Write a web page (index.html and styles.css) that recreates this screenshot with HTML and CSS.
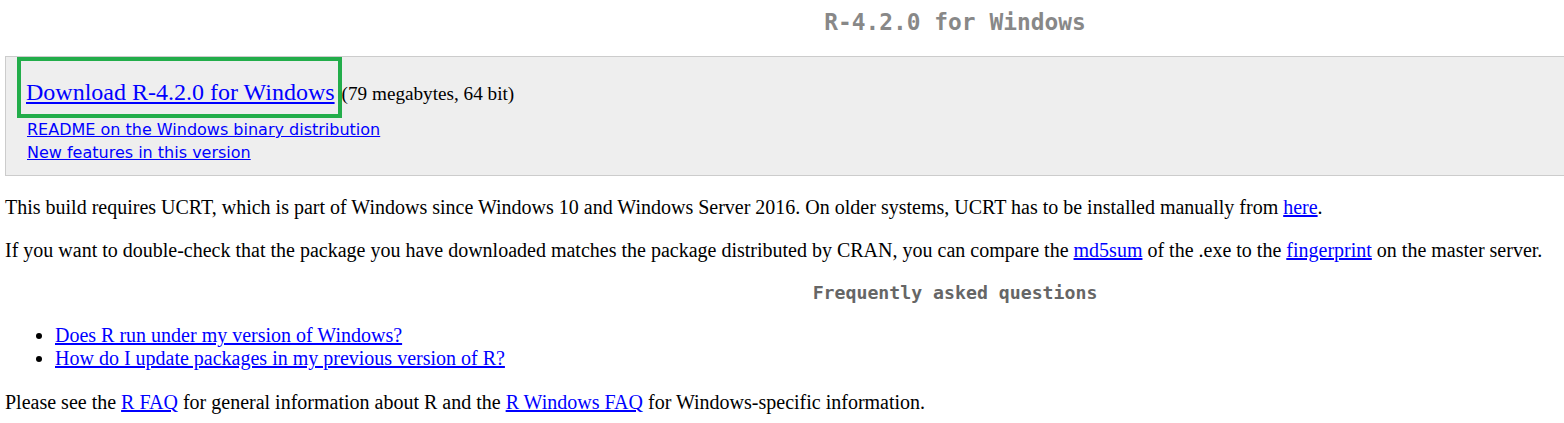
FILE: index.html
```html
<!DOCTYPE html>
<html>
<head>
<meta charset="utf-8">
<title>R-4.2.0 for Windows</title>
<link rel="stylesheet" href="styles.css">
</head>
<body>
<div class="page">
  <h1 class="title">R-4.2.0 for Windows</h1>
  <div class="box">
    <div class="dl-row">
      <span class="highlight"><a class="dl" href="#">Download R-4.2.0 for Windows</a></span><span class="size">(79 megabytes, 64 bit)</span>
    </div>
    <div class="links">
      <a href="#">README on the Windows binary distribution</a>
      <a href="#">New features in this version</a>
    </div>
  </div>
  <p class="para">This build requires UCRT, which is part of Windows since Windows 10 and Windows Server 2016. On older systems, UCRT has to be installed manually from <a href="#">here</a>.</p>
  <p class="para">If you want to double-check that the package you have downloaded matches the package distributed by CRAN, you can compare the <a href="#">md5sum</a> of the .exe to the <a href="#">fingerprint</a> on the master server.</p>
  <h2 class="faq-title">Frequently asked questions</h2>
  <ul class="faq">
    <li><a href="#">Does R run under my version of Windows?</a></li>
    <li><a href="#">How do I update packages in my previous version of R?</a></li>
  </ul>
  <p class="para last">Please see the <a href="#">R FAQ</a> for general information about R and the <a href="#">R Windows FAQ</a> for Windows-specific information.</p>
</div>
</body>
</html>
```

FILE: styles.css
```css
html, body {
  margin: 0;
  padding: 0;
  background: #ffffff;
  overflow: hidden;
}
.page {
  width: 1900px;
  padding: 0 5px;
  font-family: "Liberation Serif", "Times New Roman", serif;
  font-size: 20px;
  color: #000;
}
a {
  color: #0000ff;
}
.title {
  margin: 0;
  padding: 9px 0 0;
  height: 56px;
  box-sizing: border-box;
  text-align: center;
  font-family: "DejaVu Sans Mono", monospace;
  font-weight: bold;
  font-size: 22.85px;
  line-height: 26px;
  color: #888888;
}
.box {
  background: #eeeeee;
  border: 1px solid #cccccc;
  border-right: none;
  padding: 0 0 11px 11px;
}
.dl-row {
  display: flex;
  align-items: baseline;
}
.highlight {
  display: inline-block;
  border: 4px solid #22ad4a;
  padding: 17px 3px 7px 5px;
  line-height: 28px;
}
.dl {
  font-size: 24px;
}
.size {
  font-size: 19.2px;
  padding-left: 0;
}
.links {
  display: flex;
  flex-direction: column;
  align-items: flex-start;
  padding: 0 0 0 10px;
  font-family: "DejaVu Sans", Verdana, sans-serif;
  font-size: 16px;
  line-height: 23px;
}
.para {
  margin: 20px 0 0;
  line-height: 23px;
}
.faq-title {
  margin: 20px 0 0;
  text-align: center;
  font-family: "DejaVu Sans Mono", monospace;
  font-weight: bold;
  font-size: 18.2px;
  line-height: 22px;
  color: #666666;
}
.faq {
  margin: 20px 0 0;
  padding-left: 50px;
  line-height: 23px;
}
.para.last {
  margin-top: 21px;
}
```
